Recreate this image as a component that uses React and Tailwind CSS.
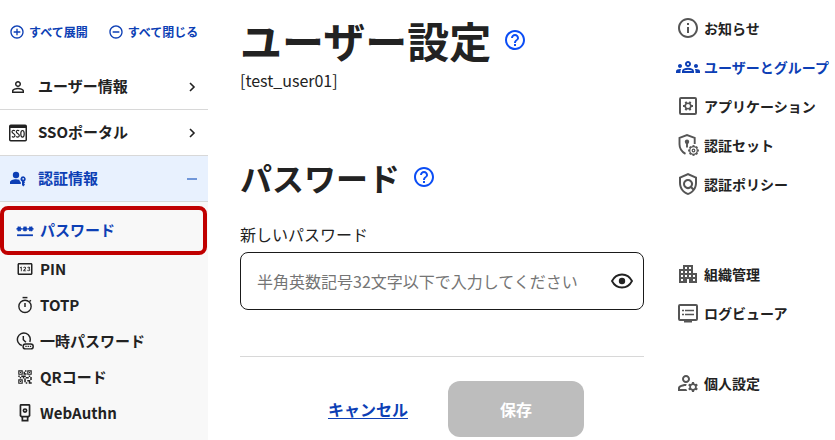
import React, { useState } from "react";
import {
  MdAddCircleOutline,
  MdRemoveCircleOutline,
  MdPersonOutline,
  MdOutlinePin,
  MdQrCode2,
  MdInfoOutline,
  MdOutlineGroups,
  MdOutlinePolicy,
  MdOutlineApartment,
  MdOutlineManageAccounts,
  MdHelpOutline,
} from "react-icons/md";

function SsoIcon({ className }) {
  return (
    <svg viewBox="0 0 18 17" className={className} fill="none" stroke="currentColor">
      <rect x="0.75" y="0.75" width="16.5" height="15.5" rx="1" strokeWidth="1.5" />
      <path d="M1 2h16" strokeWidth="3" />
      <path
        d="M6 6.3C4.300 5.300 3 6 3 7.300C3 9.300 6 8.700 6 11C6 12.600 4.300 13 2.900 12.100M10.200 6.300C8.600 5.300 7.300 6 7.300 7.300C7.300 9.300 10.300 8.700 10.300 11C10.300 12.600 8.600 13 7.200 12.100"
        strokeWidth="1.2"
      />
      <ellipse cx="13.500" cy="9.300" rx="1.700" ry="3.300" strokeWidth="1.2" />
    </svg>
  );
}

function PasskeyIcon({ className }) {
  return (
    <svg viewBox="0 0 16 16" className={className} fill="currentColor">
      <circle cx="6" cy="4" r="3.200" />
      <path d="M0 13v-1.700C0 9.200 3.200 8.200 6 8.200c1.200 0 2.300.2 3.300.5.200 1.100.7 2 1.500 2.600V13z" />
      <path
        fillRule="evenodd"
        d="M13.200 5.300a2.800 2.800 0 0 0-1.200 5.300V14l1.200 1.500 1.800-1.800-1-1.200 1-1.100-.7-.9a2.800 2.800 0 0 0-1.100-5.200zm0 1.600a.9.9 0 1 1 0 1.800.9.9 0 0 1 0-1.800z"
      />
    </svg>
  );
}

function ChevronIcon({ className }) {
  return (
    <svg viewBox="0 0 16 16" className={className} fill="none" stroke="currentColor">
      <path d="M6 4l4 4-4 4" strokeWidth="1.600" />
    </svg>
  );
}

function MinusIcon({ className }) {
  return (
    <svg viewBox="0 0 16 16" className={className} fill="none" stroke="currentColor">
      <path d="M3 8h10" strokeWidth="1.500" />
    </svg>
  );
}

const DOTS = [3, 8.5, 14];

function PasswordIcon({ className }) {
  return (
    <svg viewBox="0 0 17 17" className={className} fill="none" stroke="currentColor">
      {DOTS.map((x) => (
        <path
          key={x}
          d={`M${x - 2.5} 6.500h5M${x - 1.2} 4.400l2.400 4.200M${x + 1.2} 4.400l-2.400 4.200`}
          strokeWidth="1.500"
        />
      ))}
      <path d="M1 12.500h15" strokeWidth="1.700" />
    </svg>
  );
}

function TimerIcon({ className }) {
  return (
    <svg viewBox="0 0 17 17" className={className} fill="none" stroke="currentColor">
      <circle cx="8.500" cy="9.800" r="5.800" strokeWidth="1.300" />
      <path d="M6.200 1.500h4.600" strokeWidth="1.400" />
      <path d="M8.500 6.500v3.800M12.800 5.200l1.200-1.200" strokeWidth="1.400" />
    </svg>
  );
}

function TempPasswordIcon({ className }) {
  return (
    <svg viewBox="0 0 16 16" className={className} fill="none" stroke="currentColor">
      <path d="M5.200 12A5.700 5.700 0 1 1 12.200 8.800" strokeWidth="1.300" />
      <path d="M6.500 3.500V6.800L8.800 9.200" strokeWidth="1.300" />
      <rect x="6.300" y="10.600" width="9" height="4.400" rx="2.200" strokeWidth="1.300" />
      <path d="M8.300 12.800h5.200" strokeWidth="1.200" strokeDasharray="1.200 0.800" />
    </svg>
  );
}

function SecurityKeyIcon({ className }) {
  return (
    <svg viewBox="0 0 17 17" className={className} fill="none" stroke="currentColor" strokeWidth="1.600">
      <path d="M4.800.8h7.400a.6.6 0 0 1 .6.6V11l-1 1H5.200l-1-1V1.400a.6.6 0 0 1 .6-.6z" />
      <circle cx="8.500" cy="6.200" r="1.500" />
      <path d="M6 12v3.700h5V12" />
    </svg>
  );
}

const GEAR_TEETH = [0, 45, 90, 135, 180, 225, 270, 315];
const SMALL_GEAR_TEETH = [30, 90, 150, 210, 270, 330];

function SettingsBoxIcon({ className }) {
  return (
    <svg viewBox="0 0 24 24" className={className} fill="none" stroke="currentColor">
      <rect x="4" y="4" width="16" height="16" rx="1" strokeWidth="2" />
      <circle cx="12" cy="12" r="2.800" strokeWidth="1.600" />
      {SMALL_GEAR_TEETH.map((deg) => (
        <path key={deg} d="M12 9V7" strokeWidth="2" transform={`rotate(${deg} 12 12)`} />
      ))}
    </svg>
  );
}

function AuthSetIcon({ className }) {
  return (
    <svg viewBox="0 0 24 24" className={className} fill="none" stroke="currentColor">
      <path d="M9.500 20.800C5.500 18.600 3.500 15.200 3.500 11.200V4.900L11 2l7.700 2.900v6" strokeWidth="1.900" />
      <circle cx="11" cy="8.800" r="2.200" fill="currentColor" stroke="none" />
      <path d="M11 9v5.500" strokeWidth="1.900" />
      <circle cx="17.500" cy="17.500" r="3.800" strokeWidth="1.300" />
      <circle cx="17.500" cy="17.500" r="1.300" strokeWidth="1.200" />
      {GEAR_TEETH.map((deg) => (
        <path key={deg} d="M17.500 13.600v-1.500" strokeWidth="2" transform={`rotate(${deg} 17.500 17.500)`} />
      ))}
    </svg>
  );
}

function LogViewerIcon({ className }) {
  return (
    <svg viewBox="0 0 24 24" className={className} fill="none" stroke="currentColor">
      <rect x="3" y="4" width="18" height="15" rx="1" strokeWidth="2" />
      <path d="M8 20.500h8" strokeWidth="2" />
      <path d="M6 9.500h2M6 13.500h2M9 9.500h9M9 13.500h9" strokeWidth="1.600" />
    </svg>
  );
}

function EyeIcon({ className }) {
  return (
    <svg viewBox="0 0 24 24" className={className} fill="none" stroke="currentColor">
      <path
        d="M2 12C4.200 7.700 7.700 5.500 12 5.500S19.800 7.700 22 12C19.800 16.300 16.300 18.500 12 18.500S4.200 16.300 2 12z"
        strokeWidth="1.800"
      />
      <circle cx="12" cy="12" r="3.200" fill="currentColor" stroke="none" />
    </svg>
  );
}

const subItems = [
  { label: "PIN", icon: MdOutlinePin },
  { label: "TOTP", icon: TimerIcon },
  { label: "一時パスワード", icon: TempPasswordIcon },
  { label: "QRコード", icon: MdQrCode2 },
  { label: "WebAuthn", icon: SecurityKeyIcon },
];

const mainMenu = [
  { label: "お知らせ", icon: MdInfoOutline },
  { label: "ユーザーとグループ", icon: MdOutlineGroups, active: true },
  { label: "アプリケーション", icon: SettingsBoxIcon },
  { label: "認証セット", icon: AuthSetIcon },
  { label: "認証ポリシー", icon: MdOutlinePolicy },
];

const adminMenu = [
  { label: "組織管理", icon: MdOutlineApartment },
  { label: "ログビューア", icon: LogViewerIcon },
];

const personalMenu = [{ label: "個人設定", icon: MdOutlineManageAccounts }];

function SectionRow({ icon: Icon, label, open }) {
  return (
    <button
      className={`flex items-center w-full h-[46px] px-2 border-b border-[#d8d8d8] text-[15px] font-bold ${
        open ? "bg-[#e8f1fe] text-[#0d3fb5]" : "text-[#222]"
      }`}
    >
      <span className="flex justify-center w-5 mr-[10px]">
        <Icon className={open ? "w-4 h-4" : "w-[18px] h-[18px]"} />
      </span>
      <span className="flex-1 text-left">{label}</span>
      {open ? <MinusIcon className="w-4 h-4 text-[#4a78cc]" /> : <ChevronIcon className="w-4 h-4" />}
    </button>
  );
}

function SideNav() {
  return (
    <nav className="flex flex-col w-[208px] shrink-0">
      <div className="flex items-center h-16 px-[9px] gap-5 text-xs font-bold text-[#0d3fb5] whitespace-nowrap">
        <button className="flex items-center gap-1">
          <MdAddCircleOutline className="w-4 h-4" />
          すべて展開
        </button>
        <button className="flex items-center gap-1">
          <MdRemoveCircleOutline className="w-4 h-4" />
          すべて閉じる
        </button>
      </div>
      <SectionRow icon={MdPersonOutline} label="ユーザー情報" />
      <SectionRow icon={SsoIcon} label="SSOポータル" />
      <SectionRow icon={PasskeyIcon} label="認証情報" open />
      <div className="flex-1 bg-[#f8f8f8] pt-1 text-[15px] font-bold text-[#222]">
        <a
          href="#password"
          className="flex items-center gap-[6px] h-[49px] mr-px pl-3 border-4 border-[#c00000] rounded-lg text-[#0d3fb5]"
        >
          <PasswordIcon className="w-[18px] h-[18px]" />
          パスワード
        </a>
        <ul className="flex flex-col gap-3 pt-[2px] pl-4">
          {subItems.map(({ label, icon: Icon }) => (
            <li key={label}>
              <a href="#sub" className="flex items-center gap-[6px] h-6">
                <Icon className="w-[18px] h-[18px]" />
                {label}
              </a>
            </li>
          ))}
        </ul>
      </div>
    </nav>
  );
}

function PasswordForm() {
  const [password, setPassword] = useState("");
  const [visible, setVisible] = useState(true);

  return (
    <main className="flex-1 min-w-0 pl-8 pr-6 pt-[10px] text-[#222]">
      <div className="flex items-center gap-3">
        <h1 className="text-[42px] leading-[60px] font-bold">ユーザー設定</h1>
        <button aria-label="ヘルプ">
          <MdHelpOutline className="w-6 h-6 text-[#0b4df5]" />
        </button>
      </div>
      <p className="text-base leading-5">[test_user01]</p>

      <div className="flex items-center gap-3 mt-16">
        <h2 className="text-[32px] leading-[46px] font-bold">パスワード</h2>
        <button aria-label="ヘルプ">
          <MdHelpOutline className="w-6 h-6 text-[#0b4df5]" />
        </button>
      </div>

      <label htmlFor="new-password" className="block mt-[22px] mb-[6px] text-base leading-6">
        新しいパスワード
      </label>
      <div className="flex items-center h-[58px] px-[9px] border border-[#1a1a1a] rounded-lg bg-white">
        <input
          id="new-password"
          type={visible ? "text" : "password"}
          placeholder="半角英数記号32文字以下で入力してください"
          className="flex-1 min-w-0 h-full px-[7px] text-base outline-none placeholder:text-[#757575]"
          value={password}
          onChange={(e) => setPassword(e.target.value)}
        />
        <button aria-label="表示切替" onClick={() => setVisible(!visible)}>
          <EyeIcon className="w-6 h-6" />
        </button>
      </div>

      <div className="flex items-center justify-center gap-3 mt-[46px] pt-6 border-t border-[#d8d8d8]">
        <a
          href="#cancel"
          className="w-[136px] text-center text-base font-bold text-[#0d3fb5] underline underline-offset-2"
        >
          キャンセル
        </a>
        <button disabled className="w-[136px] h-14 rounded-xl bg-[#bdbdbd] text-base font-bold text-white">
          保存
        </button>
      </div>
    </main>
  );
}

function MenuGroup({ items }) {
  return (
    <ul className="flex flex-col gap-[15px]">
      {items.map(({ label, icon: Icon, active }) => (
        <li key={label}>
          <a
            href="#menu"
            className={`flex items-center gap-1 h-6 whitespace-nowrap ${active ? "text-[#0d3fb5]" : "text-[#222]"}`}
          >
            <Icon className={active ? "w-6 h-6" : "w-6 h-6 text-[#555]"} />
            {label}
          </a>
        </li>
      ))}
    </ul>
  );
}

function App() {
  return (
    <div className="flex min-h-screen overflow-hidden bg-white font-['Noto_Sans_CJK_JP',sans-serif]">
      <SideNav />
      <PasswordForm />
      <aside className="w-[167px] shrink-0 pl-2 pt-4 text-sm font-bold">
        <MenuGroup items={mainMenu} />
        <div className="mt-[66px]">
          <MenuGroup items={adminMenu} />
        </div>
        <div className="mt-[46px]">
          <MenuGroup items={personalMenu} />
        </div>
      </aside>
    </div>
  );
}

export default App;
